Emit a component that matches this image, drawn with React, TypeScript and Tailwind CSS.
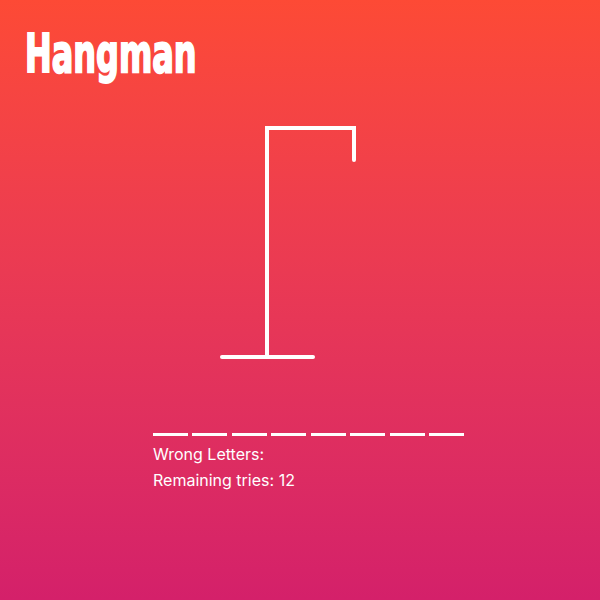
import React from "react";

export default function App() {
  const letters = Array.from({ length: 8 });
  return (
    <div className="w-full h-[600px] bg-gradient-to-b from-[#fd4a35] to-[#d4206a] text-white font-['Inter',sans-serif] flex flex-col">
      <h1 className="mt-[27px] pl-[25px] h-[53px] leading-[53px] text-[53px] font-bold font-['DejaVu_Sans_Condensed','DejaVu_Sans',sans-serif] [font-stretch:condensed]">
        <span className="inline-block origin-left scale-x-[0.67] [-webkit-text-stroke:2px_white]">Hangman</span>
      </h1>
      <div className="mt-[40px] pl-[210px]">
        <svg width="160" height="250" viewBox="0 0 160 250" className="block">
          <polyline
            points="57,237 57,8 144,8 144,40"
            fill="none"
            stroke="#fff"
            strokeWidth="4"
            strokeLinejoin="miter"
            strokeLinecap="round"
          />
          <line x1="12" y1="237" x2="103" y2="237" stroke="#fff" strokeWidth="4" strokeLinecap="round" />
        </svg>
      </div>
      <div className="mt-[42px] pl-[153px] flex flex-col">
        <div className="flex gap-[4.43px]">
          {letters.map((_, i) => (
            <span key={i} className="w-[35px] h-[24px] border-b-[3px] border-white" />
          ))}
        </div>
        <p className="mt-[6px] leading-6 text-base">Wrong Letters:</p>
        <p className="mt-[2px] leading-6 text-base">Remaining tries: 12</p>
      </div>
    </div>
  );
}
